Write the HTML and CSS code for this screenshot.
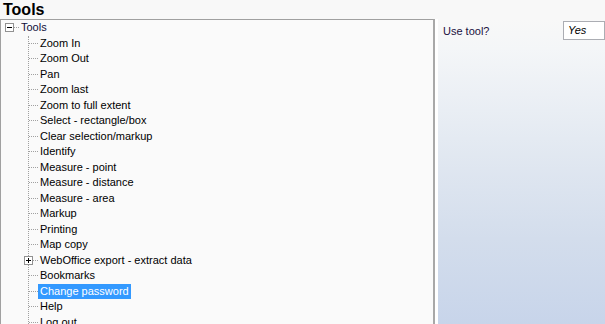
FILE: index.html
```html
<!DOCTYPE html>
<html>
<head>
  <title>Tools</title>
  <link rel="stylesheet" href="styles.css">
</head>
<body>
  <h1 class="title">Tools</h1>
  <div class="main">
    <div class="tree">
      <div class="row root">
        <span class="expander">
          <svg width="9" height="9" viewBox="0 0 9 9"><rect x="0.5" y="0.5" width="8" height="8" fill="#fff" stroke="#919191"/><path d="M2 4.5h5" stroke="#000"/></svg>
        </span>
        <span class="stub short"></span>
        <span class="label">Tools</span>
      </div>
      <ul class="children">
        <li class="row"><span class="stub"></span><span class="label">Zoom In</span></li>
        <li class="row"><span class="stub"></span><span class="label">Zoom Out</span></li>
        <li class="row"><span class="stub"></span><span class="label">Pan</span></li>
        <li class="row"><span class="stub"></span><span class="label">Zoom last</span></li>
        <li class="row"><span class="stub"></span><span class="label">Zoom to full extent</span></li>
        <li class="row"><span class="stub"></span><span class="label">Select - rectangle/box</span></li>
        <li class="row"><span class="stub"></span><span class="label">Clear selection/markup</span></li>
        <li class="row"><span class="stub"></span><span class="label">Identify</span></li>
        <li class="row"><span class="stub"></span><span class="label">Measure - point</span></li>
        <li class="row"><span class="stub"></span><span class="label">Measure - distance</span></li>
        <li class="row"><span class="stub"></span><span class="label">Measure - area</span></li>
        <li class="row"><span class="stub"></span><span class="label">Markup</span></li>
        <li class="row"><span class="stub"></span><span class="label">Printing</span></li>
        <li class="row"><span class="stub"></span><span class="label">Map copy</span></li>
        <li class="row">
          <span class="stub">
            <svg class="plus" width="9" height="9" viewBox="0 0 9 9"><rect x="0.5" y="0.5" width="8" height="8" fill="#fff" stroke="#919191"/><path d="M2 4.5h5M4.5 2v5" stroke="#000"/></svg>
          </span>
          <span class="label">WebOffice export - extract data</span>
        </li>
        <li class="row"><span class="stub"></span><span class="label">Bookmarks</span></li>
        <li class="row"><span class="stub"></span><span class="label selected">Change password</span></li>
        <li class="row"><span class="stub"></span><span class="label">Help</span></li>
        <li class="row"><span class="stub"></span><span class="label">Log out</span></li>
      </ul>
    </div>
    <div class="props">
      <div class="prop">
        <span class="prop-name">Use tool?</span>
        <span class="prop-value">Yes</span>
      </div>
    </div>
  </div>
</body>
</html>
```

FILE: styles.css
```css
body {
  margin: 0;
  background: #f8f8f8;
  font-family: "Liberation Sans", Arial, sans-serif;
  font-size: 11px;
  color: #000;
  overflow: hidden;
}

.title {
  margin: 0;
  padding: 0 3px;
  font-size: 16px;
  line-height: 19px;
  font-weight: bold;
  height: 19px;
}

.main {
  display: flex;
  height: 310px;
}

.tree {
  width: 428px;
  border: 1px solid #a0a0a0;
  border-right: 2px solid #a8a8a8;
  background: #fafafa;
  padding: 0 0 0 4px;
}

.row {
  display: flex;
  align-items: center;
  height: 15.5px;
}

.expander {
  display: flex;
  width: 9px;
  height: 9px;
}

.stub {
  display: flex;
  align-items: center;
  width: 9px;
  height: 100%;
  background: repeating-linear-gradient(to right, #a0a0a0 0 1px, transparent 1px 2px) no-repeat 0 50% / 9px 1px;
}

.stub.short {
  width: 6px;
  background-size: 6px 1px;
}

.plus {
  margin-left: -5px;
}

.label {
  padding: 0 2px;
  line-height: 15px;
  white-space: nowrap;
}

.root .label {
  padding-left: 1px;
  color: #10103a;
}

.selected {
  background: #3399ff;
  color: #fff;
}

.children {
  list-style: none;
  margin: 0 0 0 23px;
  padding: 0;
  border-left: 1px dotted #a0a0a0;
}

.props {
  flex: 1;
  border-left: 3px solid #fff;
  background: linear-gradient(to bottom, #f8f8f8 0, #f4f6f8 30px, #e4eaf2 120px, #d3ddec 220px, #c7d4ea 310px);
  padding: 2px 0 0 5px;
}

.prop {
  display: flex;
  align-items: center;
  justify-content: space-between;
  height: 19px;
}

.prop-name {
  color: #1a1040;
}

.prop-value {
  width: 36px;
  height: 17px;
  border: 1px solid #abadb3;
  background: #fff;
  font-style: italic;
  padding-left: 4px;
  line-height: 17px;
}
```
